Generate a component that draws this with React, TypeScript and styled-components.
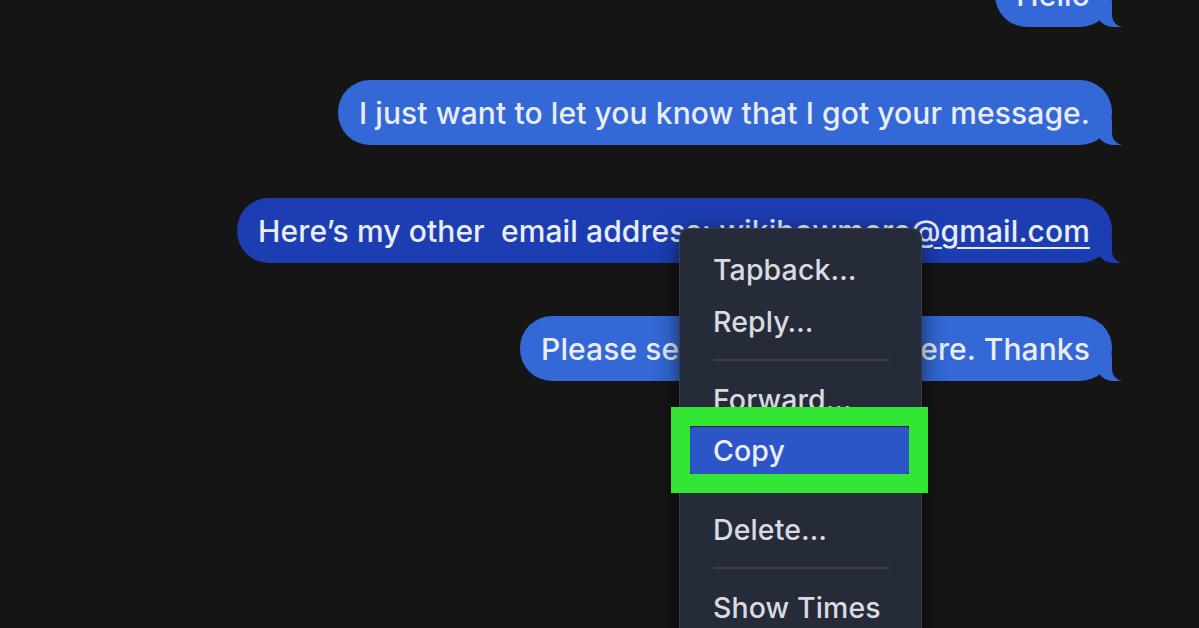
import * as React from 'react';
import styled, { createGlobalStyle } from 'styled-components';

const GlobalStyle = createGlobalStyle`
  html, body {
    margin: 0;
    padding: 0;
    background: #151515;
  }
  * {
    box-sizing: border-box;
  }
`;

const PAGE_BG = '#151515';

const Screen = styled.div`
  position: relative;
  width: 1199px;
  height: 628px;
  overflow: hidden;
  background: ${PAGE_BG};
  font-family: Inter, "Liberation Sans", Arial, sans-serif;
`;

const Thread = styled.div`
  display: flex;
  flex-direction: column;
  align-items: flex-end;
  gap: 53px;
  margin-top: -38px;
  padding-right: 87px;
`;

const Bubble = styled.div<{ $selected?: boolean }>`
  --bubble: ${(p) => (p.$selected ? '#1c3eb2' : '#3368d6')};
  position: relative;
  display: flex;
  align-items: center;
  height: 65px;
  padding: 0 22px 0 21px;
  border-radius: 32px;
  background: var(--bubble);
  color: #e8edf8;
  font-size: 30px;
  font-weight: 500;
  white-space: pre;
  letter-spacing: 0.1px;

  &::before {
    content: '';
    position: absolute;
    right: -10px;
    bottom: 0;
    width: 26px;
    height: 26px;
    background: var(--bubble);
    border-bottom-left-radius: 18px 16px;
  }

  &::after {
    content: '';
    position: absolute;
    right: -30px;
    bottom: 0;
    width: 30px;
    height: 28px;
    background: ${PAGE_BG};
    border-bottom-left-radius: 12px;
  }
`;

const Email = styled.span`
  text-decoration: underline;
  text-decoration-thickness: 2px;
  text-underline-offset: 5px;
`;

const Menu = styled.div`
  position: absolute;
  left: 679px;
  top: 228px;
  width: 243px;
  height: 420px;
  padding-top: 14px;
  background: #262b39;
  border: 1px solid #3a3e4a;
  border-radius: 10px;
  box-shadow: 0 6px 24px rgba(0, 0, 0, 0.6);
  display: flex;
  flex-direction: column;
`;

const Item = styled.div<{ $active?: boolean }>`
  position: relative;
  display: flex;
  align-items: center;
  height: ${(p) => (p.$active ? '47px' : '52px')};
  margin: ${(p) => (p.$active ? '2px 12px 3px 10px' : '0 12px 0 10px')};
  padding-left: 23px;
  border-radius: 3px;
  background: ${(p) => (p.$active ? '#2c55c8' : 'transparent')};
  color: ${(p) => (p.$active ? '#e9eefa' : '#d9dbe1')};
  font-size: 28.5px;
  font-weight: 500;
  letter-spacing: 0.1px;
`;

const Highlight = styled.span`
  position: absolute;
  top: -20px;
  right: -19px;
  bottom: -19px;
  left: -19px;
  border: 19px solid #33e633;
  pointer-events: none;
`;

const Separator = styled.div`
  display: flex;
  align-items: center;
  height: 26px;
  padding: 0 32px 0 33px;

  &::before {
    content: '';
    flex: 1;
    height: 2px;
    background: #3a3e4a;
  }
`;

export default function App() {
  return (
    <Screen>
      <GlobalStyle />
      <Thread>
        <Bubble>Hello</Bubble>
        <Bubble>I just want to let you know that I got your message.</Bubble>
        <Bubble $selected>
          {'Here’s my other  email address: '}
          <Email>wikihowmore@gmail.com</Email>
        </Bubble>
        <Bubble>Please send your replies here. Thanks</Bubble>
      </Thread>
      <Menu>
        <Item>Tapback…</Item>
        <Item>Reply…</Item>
        <Separator />
        <Item>Forward…</Item>
        <Item $active>
          Copy
          <Highlight />
        </Item>
        <Separator />
        <Item>Delete…</Item>
        <Separator />
        <Item>Show Times</Item>
      </Menu>
    </Screen>
  );
}
